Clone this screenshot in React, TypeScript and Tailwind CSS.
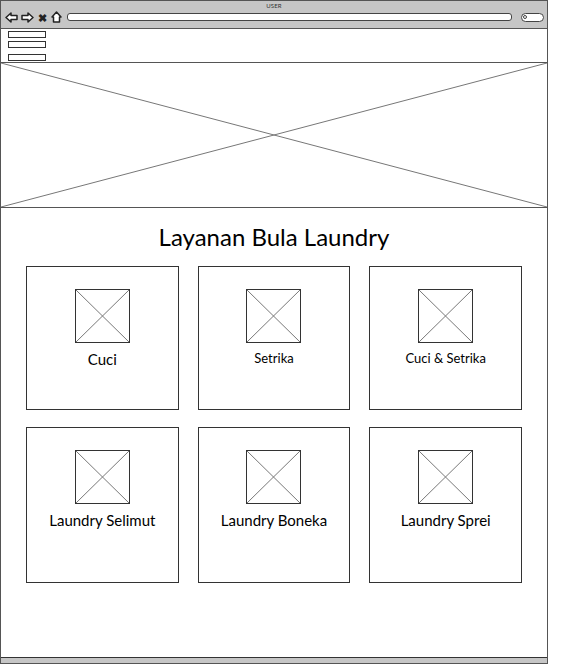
import React from 'react';

const services = [
  { name: 'Cuci', size: 'text-[15px]', h: 'h-[144px]' },
  { name: 'Setrika', size: 'text-[13px]', h: 'h-[144px]' },
  { name: 'Cuci & Setrika', size: 'text-[13px]', h: 'h-[144px]' },
  { name: 'Laundry Selimut', size: 'text-[15px]', h: 'h-[156px]' },
  { name: 'Laundry Boneka', size: 'text-[15px]', h: 'h-[156px]' },
  { name: 'Laundry Sprei', size: 'text-[15px]', h: 'h-[156px]' },
];

const CrossBox = ({ className }: { className?: string }) => (
  <svg className={className} viewBox="0 0 100 100" preserveAspectRatio="none">
    <line x1="0" y1="0" x2="100" y2="100" stroke="#777" strokeWidth="1" vectorEffect="non-scaling-stroke" />
    <line x1="100" y1="0" x2="0" y2="100" stroke="#777" strokeWidth="1" vectorEffect="non-scaling-stroke" />
  </svg>
);

const ArrowIcon = ({ flip }: { flip?: boolean }) => (
  <svg width="13" height="11" viewBox="0 0 13 11" className={flip ? 'scale-x-[-1]' : ''}>
    <path d="M1 5.5 L6 1 V3.5 H12 V7.5 H6 V10 Z" fill="white" stroke="#222" strokeWidth="1.5" strokeLinejoin="round" />
  </svg>
);

const HomeIcon = () => (
  <svg width="11" height="12" viewBox="0 0 11 12">
    <path d="M1 6 L5.5 1 L10 6 H8.5 V11 H2.5 V6 Z" fill="white" stroke="#222" strokeWidth="1.5" strokeLinejoin="round" />
  </svg>
);

export default function App() {
  return (
    <div className="w-[571px] h-[664px] bg-white overflow-hidden" style={{ fontFamily: 'Lato, "Noto Sans", sans-serif' }}>
      <div className="w-[548px] h-full border border-[#555] flex flex-col">
        {/* browser bar */}
        <div className="h-[27px] bg-[#c6c6c6] shrink-0 flex flex-col">
          <div className="text-[6px] leading-none text-[#333] text-center pt-[2px] tracking-wide">USER</div>
          <div className="flex items-center gap-[3px] pl-[4px] pr-[3px] mt-[2px]">
            <ArrowIcon />
            <ArrowIcon flip />
            <span className="text-[11px] font-bold leading-none text-[#222] mx-[1px]">✖</span>
            <HomeIcon />
            <div className="ml-[2px] flex-1 h-[8px] bg-white border border-[#444] rounded-[3px]" />
            <div className="ml-[6px] w-[23px] h-[9px] bg-white border border-[#444] rounded-full flex items-center pl-[1px]">
              <span className="w-[4px] h-[4px] rounded-full border border-[#444]" />
            </div>
          </div>
        </div>

        {/* nav */}
        <div className="h-[35px] shrink-0 border-t border-[#444] border-b border-[#555] pl-[7px] pt-[2px] flex flex-col">
          <div className="w-[38px] h-[7px] border border-[#333]" />
          <div className="w-[38px] h-[7px] border border-[#333] mt-[3px]" />
          <div className="w-[38px] h-[7px] border border-[#333] mt-[6px]" />
        </div>

        {/* hero */}
        <div className="h-[145px] shrink-0 border-b border-[#555]">
          <CrossBox className="w-full h-full block" />
        </div>

        {/* services */}
        <div className="flex-1 flex flex-col items-center">
          <h1 className="text-[24px] leading-none text-black mt-[17px]">Layanan Bula Laundry</h1>
          <div className="grid grid-cols-3 gap-x-[19px] gap-y-[17px] mt-[17px] w-[496px]">
            {services.map((s) => (
              <div key={s.name} className={`${s.h} border border-[#333] flex flex-col items-center pt-[22px]`}>
                <div className="w-[55px] h-[54px] border border-[#333]">
                  <CrossBox className="w-full h-full block" />
                </div>
                <span className={`${s.size} text-black mt-[9px] leading-none`}>{s.name}</span>
              </div>
            ))}
          </div>
        </div>

        {/* status bar */}
        <div className="h-[6px] shrink-0 bg-[#c6c6c6] border-t border-[#333]" />
      </div>
    </div>
  );
}
